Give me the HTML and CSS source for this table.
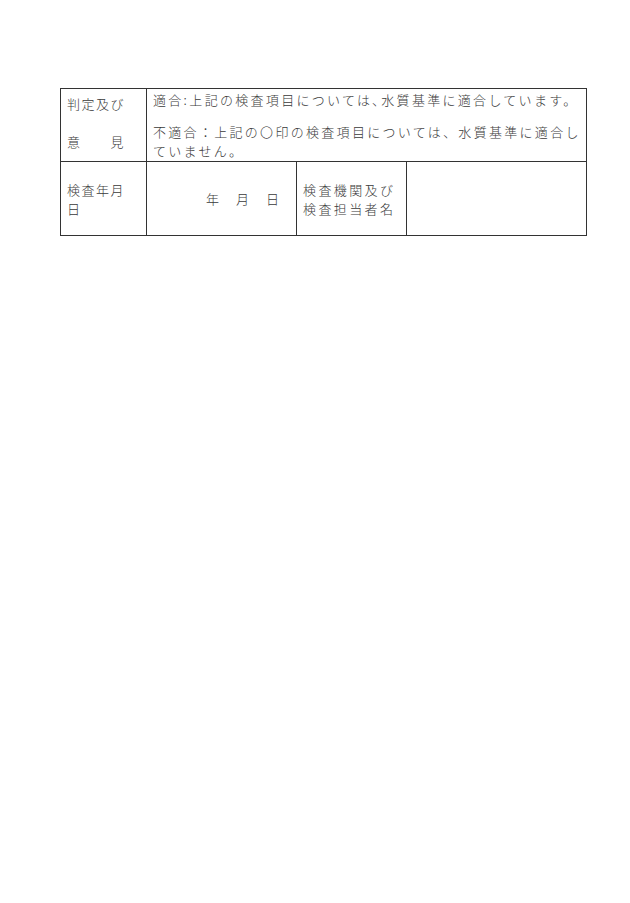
FILE: index.html
```html
<!DOCTYPE html>
<html lang="ja">
<head>
<meta charset="utf-8">
<title>検査結果</title>
<link rel="stylesheet" href="styles.css">
</head>
<body>
<div class="sheet">
  <div class="cell label judge">
    <div class="line">判定及び</div>
    <div class="line spread"><span>意</span><span>見</span></div>
  </div>
  <div class="cell wide opinion">
    <p class="para">適合<span class="half">:</span>上記の検査項目については<span class="half">､</span>水質基準に適合しています。</p>
    <p class="para gap">不適合：上記の〇印の検査項目については、水質基準に適合し<br>ていません。</p>
  </div>
  <div class="cell label mid">
    <div class="line">検査年月<br>日</div>
  </div>
  <div class="cell date">
    <span>年</span><span>月</span><span>日</span>
  </div>
  <div class="cell mid inspector">
    <div class="line">検査機関及び<br>検査担当者名</div>
  </div>
  <div class="cell blank"></div>
</div>
</body>
</html>
```
FILE: styles.css
```css
html, body {
  margin: 0;
  padding: 0;
  background: #ffffff;
}
body {
  padding: 88px 0 0 60px;
  font-family: "Noto Sans CJK JP", "Noto Sans", sans-serif;
  font-size: 13px;
  font-weight: 300;
  color: #3a3a3a;
}
.sheet {
  display: grid;
  grid-template-columns: 86px 150px 110px 180px;
  grid-template-rows: 73px 74px;
  width: 526px;
  border-left: 1px solid #333;
  border-top: 1px solid #333;
}
.cell {
  border-right: 1px solid #333;
  border-bottom: 1px solid #333;
  box-sizing: border-box;
  line-height: 19px;
}
.label {
  padding-left: 6px;
  letter-spacing: 1.5px;
}
.judge {
  padding-top: 5px;
}
.judge .spread {
  margin-top: 19px;
  width: 58px;
  display: flex;
  justify-content: space-between;
}
.wide {
  grid-column: 2 / 5;
}
.opinion {
  padding: 1px 2px 0 6px;
  letter-spacing: 2.3px;
}
.para {
  margin: 0;
}
.para.gap {
  margin-top: 13px;
}
.half {
  letter-spacing: 2.5px;
}
.mid {
  display: flex;
  align-items: center;
}
.date {
  display: flex;
  align-items: center;
  padding-left: 59px;
  gap: 17px;
}
.inspector {
  padding-left: 6px;
  letter-spacing: 2.4px;
}
```
